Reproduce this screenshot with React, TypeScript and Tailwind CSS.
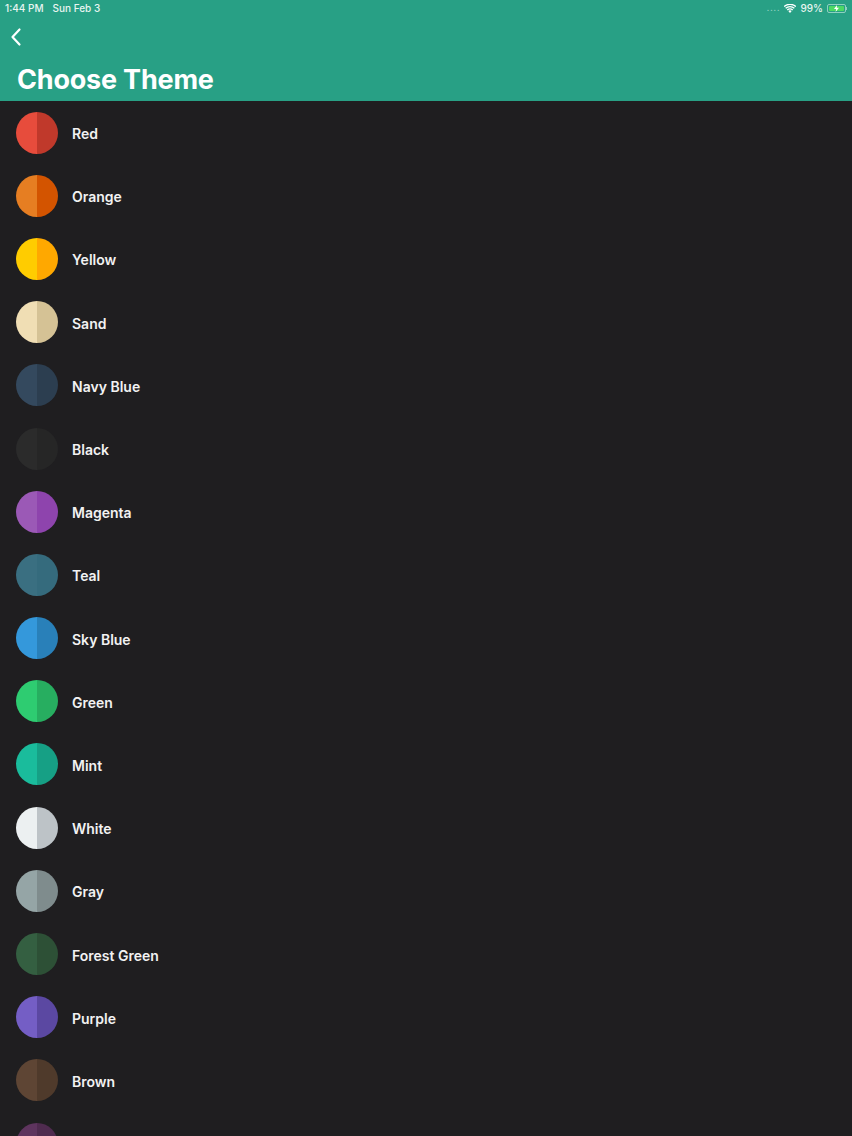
import React from "react";

const themes: { name: string; a: string; b: string; hidden?: boolean }[] = [
  { name: "Red", a: "#E74C3C", b: "#C0392B" },
  { name: "Orange", a: "#E67E22", b: "#D35400" },
  { name: "Yellow", a: "#FFCC00", b: "#FFA800" },
  { name: "Sand", a: "#F0DEB4", b: "#D5C295" },
  { name: "Navy Blue", a: "#34495E", b: "#2C3E50" },
  { name: "Black", a: "#2B2B2B", b: "#262626" },
  { name: "Magenta", a: "#9B59B6", b: "#8E44AD" },
  { name: "Teal", a: "#3A6F81", b: "#356B7D" },
  { name: "Sky Blue", a: "#3498DB", b: "#2980B9" },
  { name: "Green", a: "#2ECC71", b: "#27AE60" },
  { name: "Mint", a: "#1ABC9C", b: "#16A085" },
  { name: "White", a: "#ECF0F1", b: "#BDC3C7" },
  { name: "Gray", a: "#95A5A6", b: "#7F8C8D" },
  { name: "Forest Green", a: "#345F41", b: "#2D5036" },
  { name: "Purple", a: "#745EC5", b: "#5B48A2" },
  { name: "Brown", a: "#5E4534", b: "#4F3A2B" },
  { name: "", a: "#5E345E", b: "#4F2B4F", hidden: true },
];

export default function App() {
  return (
    <div
      className="w-[852px] h-[1136px] overflow-hidden bg-[#1f1e20] flex flex-col"
      style={{ fontFamily: "Inter, 'Noto Sans', sans-serif" }}
    >
      <div className="bg-[#28a085] text-white shrink-0 h-[101px] flex flex-col">
        <div className="h-[16px] flex items-center justify-between px-[5px] text-[10px] font-medium text-[#e8f5f1]">
          <div className="flex gap-[9px]">
            <span>1:44 PM</span>
            <span>Sun Feb 3</span>
          </div>
          <div className="flex items-center gap-[4px]">
            <span className="text-[8px] tracking-[1px] text-[#8fd0c0]">....</span>
            <svg width="12" height="9" viewBox="0 0 12 9" fill="#ffffff">
              <path d="M6 9 L4.3 7.1 A2.5 2.5 0 0 1 7.7 7.1 Z" />
              <path d="M2.8 5.5 A4.6 4.6 0 0 1 9.2 5.5 L8.3 6.5 A3.3 3.3 0 0 0 3.7 6.5 Z" />
              <path d="M1.2 3.8 A7 7 0 0 1 10.8 3.8 L9.9 4.8 A5.7 5.7 0 0 0 2.1 4.8 Z" />
              <path d="M-0.3 2.1 A9.3 9.3 0 0 1 12.3 2.1 L11.4 3.1 A8 8 0 0 0 0.6 3.1 Z" />
            </svg>
            <span>99%</span>
            <div className="flex items-center">
              <div className="w-[19px] h-[9px] rounded-[2px] border border-[#8fd0c0] p-[1px]">
                <div className="w-full h-full bg-[#4cd964] rounded-[1px] flex items-center justify-center">
                  <svg width="5" height="7" viewBox="0 0 5 7" fill="#ffffff">
                    <path d="M3 0 L0 4 L2.2 4 L1.6 7 L5 2.8 L2.8 2.8 Z" />
                  </svg>
                </div>
              </div>
              <div className="w-[1px] h-[3px] bg-[#8fd0c0]" />
            </div>
          </div>
        </div>
        <div className="h-[42px] flex items-center pl-[9px]">
          <svg width="14" height="20" viewBox="0 0 14 20" fill="none">
            <path d="M10.5 2.5 L3.5 10 L10.5 17.5" stroke="#ffffff" strokeWidth="2.2" strokeLinecap="round" strokeLinejoin="round" />
          </svg>
        </div>
        <div className="mt-[5px] pl-[17px] text-[27px] font-bold leading-[34px] tracking-[-0.2px]">Choose Theme</div>
      </div>
      <div className="flex flex-col">
        {themes.map((t, i) => (
          <div key={i} className="h-[63.2px] shrink-0 flex items-center pl-[16px]">
            <div className="w-[42px] h-[42px] rounded-full overflow-hidden flex shrink-0">
              <div className="w-1/2 h-full" style={{ backgroundColor: t.a }} />
              <div className="w-1/2 h-full" style={{ backgroundColor: t.b }} />
            </div>
            {!t.hidden && (
              <span className="ml-[14px] mt-[2px] text-[14px] font-semibold text-[#f2f2f2]">{t.name}</span>
            )}
          </div>
        ))}
      </div>
    </div>
  );
}
